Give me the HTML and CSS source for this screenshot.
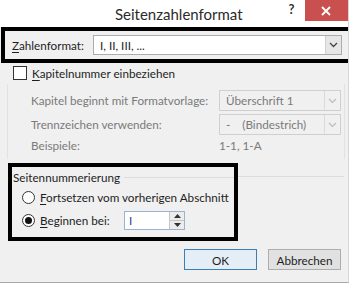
FILE: index.html
```html
<!DOCTYPE html>
<html lang="de">
<head>
    <meta charset="UTF-8">
    <title>Seitenzahlenformat</title>
    <link rel="stylesheet" href="styles.css">
</head>
<body>
    <div class="dialog">
        <div class="titlebar">
            <span class="title">Seitenzahlenformat</span>
            <span class="help">?</span>
            <span class="close">
                <svg width="10" height="10" viewBox="0 0 10 10"><path d="M1 1L9 9M9 1L1 9" stroke="#fff" stroke-width="1.8"/></svg>
            </span>
        </div>

        <div class="mark mark-format">
            <label class="lbl"><u>Z</u>ahlenformat:</label>
            <div class="select wide">
                <span>I, II, III, ...</span>
                <span class="arrow"><svg width="9" height="6" viewBox="0 0 9 6"><path d="M1 1L4.5 4.5L8 1" fill="none" stroke="#444" stroke-width="1.3"/></svg></span>
            </div>
        </div>

        <div class="check-row">
            <span class="checkbox"></span>
            <span><u>K</u>apitelnummer einbeziehen</span>
        </div>

        <div class="chapter">
            <div class="row">
                <span class="dim-label">Kapitel beginnt mit Formatvorlage:</span>
                <div class="select off">
                    <span>Überschrift 1</span>
                    <span class="arrow"><svg width="9" height="6" viewBox="0 0 9 6"><path d="M1 1L4.5 4.5L8 1" fill="none" stroke="#bbb" stroke-width="1.2"/></svg></span>
                </div>
            </div>
            <div class="row">
                <span class="dim-label">Trennzeichen verwenden:</span>
                <div class="select off">
                    <span>-&nbsp;&nbsp;&nbsp;&nbsp;(Bindestrich)</span>
                    <span class="arrow"><svg width="9" height="6" viewBox="0 0 9 6"><path d="M1 1L4.5 4.5L8 1" fill="none" stroke="#bbb" stroke-width="1.2"/></svg></span>
                </div>
            </div>
            <div class="row example">
                <span class="dim-label">Beispiele:</span>
                <span class="dim-value">1-1, 1-A</span>
            </div>
        </div>

        <div class="numbering">
            <div class="mark mark-numbering">
                <div class="legend"><span>Seitennummerierung</span><span class="rule"></span></div>
                <div class="radio-row">
                    <span class="radio"></span>
                    <span><u>F</u>ortsetzen vom vorherigen Abschnitt</span>
                </div>
                <div class="radio-row second">
                    <span class="radio on"></span>
                    <span class="start-label"><u>B</u>eginnen bei:</span>
                    <div class="spin">
                        <span class="spin-value">I</span>
                        <span class="spin-btns">
                            <span class="spin-btn"><svg width="7" height="4" viewBox="0 0 7 4"><path d="M0 4L3.5 0L7 4Z" fill="#333"/></svg></span>
                            <span class="spin-btn"><svg width="7" height="4" viewBox="0 0 7 4"><path d="M0 0L3.5 4L7 0Z" fill="#333"/></svg></span>
                        </span>
                    </div>
                </div>
            </div>
            <span class="rule outside"></span>
        </div>

        <div class="buttons">
            <button class="btn default">OK</button>
            <button class="btn">Abbrechen</button>
        </div>
    </div>
</body>
</html>
```

FILE: styles.css
```css
body {
    margin: 0;
    background-color: #fff;
    font-family: Lato, "Liberation Sans", sans-serif;
    font-size: 11.7px;
    line-height: 15px;
    color: #1e1e1e;
    white-space: nowrap;
}
.dialog {
    width: 348px;
    height: 282px;
    background-color: #f0f0f0;
    border-right: 1px solid #d6d6d6;
    border-bottom: 1px solid #a8a8a8;
    overflow: hidden;
}
.titlebar {
    height: 27px;
    background-color: #fff;
    display: flex;
    align-items: flex-start;
}
.title {
    margin-left: 115px;
    margin-top: 5px;
    font-size: 15px;
    line-height: 18px;
    color: #2b2b2b;
}
.help {
    margin-left: 46px;
    margin-top: 2px;
    font-weight: bold;
    font-size: 13px;
    color: #333;
}
.close {
    margin-left: 10px;
    width: 46px;
    height: 21px;
    background-color: #c9504f;
    display: flex;
    align-items: center;
    justify-content: center;
}
u {
    text-decoration-thickness: 1px;
    text-underline-offset: 2px;
}

/* schwarze Markierungen */
.mark {
    border: 4px solid #000;
}
.mark-format {
    width: 343px;
    height: 28px;
    margin-left: 1px;
    display: flex;
    align-items: center;
    box-sizing: content-box;
}
.lbl {
    margin-left: 7px;
    width: 81px;
}
.select {
    display: flex;
    align-items: center;
    justify-content: space-between;
    height: 19px;
    border: 1px solid #acacac;
    background-color: #fff;
    padding-left: 6px;
    box-sizing: border-box;
}
.select.wide {
    width: 249px;
    height: 20px;
}
.arrow {
    width: 15px;
    height: 100%;
    display: flex;
    align-items: center;
    justify-content: center;
    background-color: #e6e6e6;
    border-left: 1px solid #d0d0d0;
}
.check-row {
    display: flex;
    align-items: center;
    gap: 5px;
    margin: 3px 0 0 13px;
    height: 14px;
}
.checkbox {
    width: 12px;
    height: 12px;
    border: 1px solid #333;
    background-color: #fff;
}

.chapter {
    margin: 4px 3px 0 7px;
    border-left: 1px solid #e2e2e2;
    border-right: 1px solid #e2e2e2;
    padding: 6px 0 3px 23px;
    color: #7a7a7a;
}
.row {
    display: flex;
    align-items: center;
    margin-bottom: 3px;
}
.dim-label {
    width: 188px;
}
.select.off {
    width: 122px;
    height: 21px;
    background-color: #f0f0f0;
    border-color: #cfcfcf;
}
.select.off .arrow {
    background-color: #f0f0f0;
    border-left-color: #dadada;
}
.row.example {
    margin-top: 3px;
}

.numbering {
    display: flex;
    align-items: flex-start;
    margin-top: 4px;
}
.mark-numbering {
    width: 222px;
    height: 67px;
    margin-left: 8px;
    padding-top: 3px;
    box-sizing: content-box;
}
.legend {
    display: flex;
    align-items: center;
    margin-left: 1px;
}
.rule {
    flex: 1;
    height: 0;
    border-top: 1px solid #dcdcdc;
    margin-left: 4px;
}
.rule.outside {
    margin: 13px 4px 0 0;
}
.radio-row {
    display: flex;
    align-items: center;
    gap: 5px;
    height: 15px;
    margin-left: 10px;
    margin-top: 5px;
}
.radio-row.second {
    margin-top: 8px;
}
.radio {
    width: 11px;
    height: 11px;
    border: 1px solid #333;
    border-radius: 50%;
    background-color: #fff;
    display: flex;
    align-items: center;
    justify-content: center;
}
.radio.on::after {
    content: "";
    width: 7px;
    height: 7px;
    border-radius: 50%;
    background-color: #111;
}
.start-label {
    width: 79px;
}
.spin {
    display: flex;
    width: 61px;
    height: 19px;
    border: 1px solid #9ab3cf;
    background-color: #fff;
    box-sizing: border-box;
}
.spin-value {
    flex: 1;
    padding-left: 4px;
    line-height: 17px;
    color: #1f3f8f;
}
.spin-btns {
    width: 14px;
    display: flex;
    flex-direction: column;
    border-left: 1px solid #c6c6c6;
}
.spin-btn {
    flex: 1;
    display: flex;
    align-items: center;
    justify-content: center;
    background-color: #ececec;
}
.spin-btn + .spin-btn {
    border-top: 1px solid #c6c6c6;
}

.buttons {
    display: flex;
    justify-content: flex-end;
    gap: 11px;
    margin: 8px 7px 0 0;
}
.btn {
    width: 73px;
    height: 21px;
    font-family: inherit;
    font-size: 11.7px;
    color: #1e1e1e;
    background-color: #e1e1e1;
    border: 1px solid #adadad;
    padding: 0;
}
.btn.default {
    border-color: #3c7fb1;
    background-color: #e5eef6;
}
```
